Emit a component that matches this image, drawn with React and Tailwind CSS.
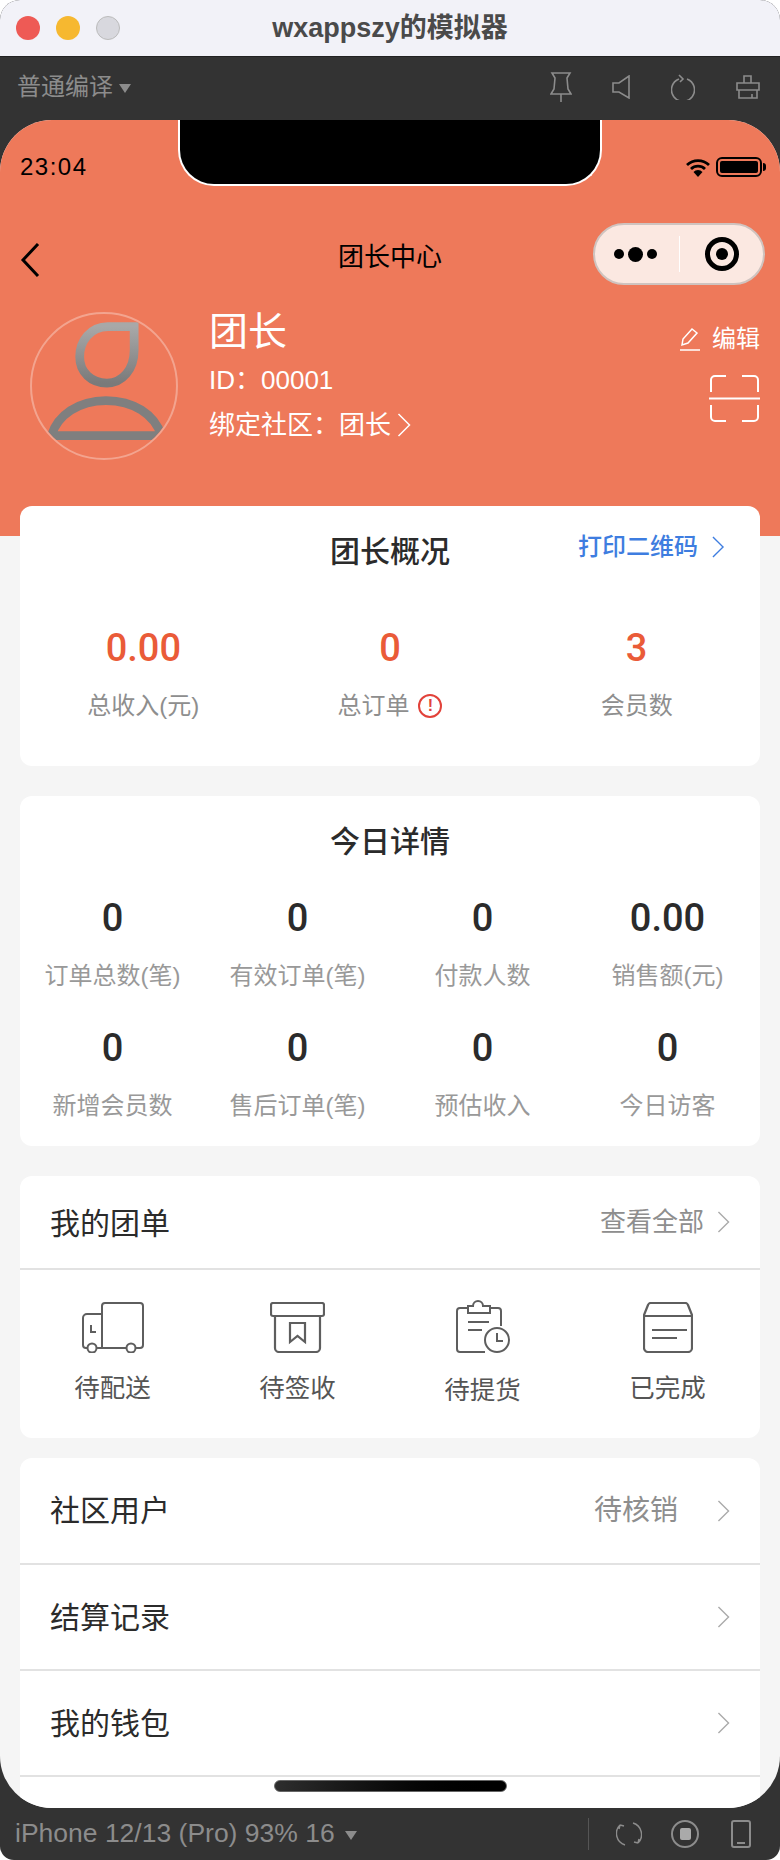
import React from 'react';

const FONT = "font-['Liberation_Sans','Noto_Sans_CJK_SC',sans-serif]";

const Chevron = ({ className }) => (
  <svg viewBox="0 0 14 24" fill="none" stroke="currentColor" strokeWidth="1.5" className={className}>
    <path d="M1.5 1L12.5 12 1.5 23" />
  </svg>
);

const Stat = ({ value, label, extra, color = 'text-[#2b2b2b]', labelColor = 'text-[#8e8e8e]' }) => (
  <div className="flex flex-col items-center">
    <div className={`font-['Roboto',sans-serif] font-medium text-[38px] leading-[42px] ${color}`}>{value}</div>
    <div className={`flex items-center gap-[9px] mt-[21px] text-[24px] leading-[32px] ${labelColor}`}>
      {label}
      {extra}
    </div>
  </div>
);

const Truck = () => (
  <svg viewBox="0 0 62 51" className="w-[62px] h-[51px]" fill="none" stroke="#5e5e5e" strokeWidth="2">
    <path d="M20 12H5a4 4 0 0 0-4 4v27a3 3 0 0 0 3 3h1M20 46V4a3 3 0 0 1 3-3h35a3 3 0 0 1 3 3v39a3 3 0 0 1-3 3h-4M15 46h29" />
    <circle cx="10" cy="46" r="4.5" />
    <circle cx="49" cy="46" r="4.5" />
    <path d="M9 23v7h5" />
  </svg>
);

const Box = () => (
  <svg viewBox="0 0 55 51" className="w-[55px] h-[51px]" fill="none" stroke="#5e5e5e" strokeWidth="2.2">
    <rect x="1" y="1" width="53" height="13" rx="2" />
    <path d="M5 14v32a4 4 0 0 0 4 4h37a4 4 0 0 0 4-4V14" />
    <path d="M20 21h15v19l-7.5-6-7.5 6z" />
  </svg>
);

const Clipboard = () => (
  <svg viewBox="0 0 54 53" className="w-[54px] h-[53px]" fill="none" stroke="#5e5e5e" strokeWidth="2">
    <path d="M12 8H4a3 3 0 0 0-3 3v38a3 3 0 0 0 3 3h25M34 8h8a3 3 0 0 1 3 3v15" />
    <path d="M12 13V6h5a5 5 0 0 1 10 0h7v7z" />
    <path d="M12 22h21M12 30h14" />
    <circle cx="41" cy="40" r="12" />
    <path d="M41 33v8h6" />
  </svg>
);

const Carton = () => (
  <svg viewBox="0 0 50 51" className="w-[50px] h-[51px]" fill="none" stroke="#5e5e5e" strokeWidth="2.2">
    <path d="M1 13L5 3a3 3 0 0 1 3-2h34a3 3 0 0 1 3 2l4 10v33a4 4 0 0 1-4 4H5a4 4 0 0 1-4-4zM1 14h48" />
    <path d="M9 28h35M9 36h25" />
  </svg>
);

const orderTypes = [
  { icon: Truck, label: '待配送', labelClass: 'mt-[18px]' },
  { icon: Box, label: '待签收', labelClass: 'mt-[18px]' },
  { icon: Clipboard, label: '待提货', labelClass: 'mt-[20px]' },
  { icon: Carton, label: '已完成', labelClass: 'mt-[18px]' },
];

const today = [
  ['0', '订单总数(笔)'],
  ['0', '有效订单(笔)'],
  ['0', '付款人数'],
  ['0.00', '销售额(元)'],
  ['0', '新增会员数'],
  ['0', '售后订单(笔)'],
  ['0', '预估收入'],
  ['0', '今日访客'],
];

const rows = [
  { label: '社区用户', right: '待核销', height: 'h-[107px]' },
  { label: '结算记录', height: 'h-[106px]' },
  { label: '我的钱包', height: 'h-[106px]' },
];

export default function App() {
  return (
    <div className={`${FONT} w-[780px] h-[1860px] bg-white overflow-hidden`}>
      <div className="w-full h-full bg-[#333333] rounded-t-[20px] rounded-b-[14px] overflow-hidden flex flex-col">
        {/* title bar */}
        <div className="relative h-[57px] shrink-0 bg-[#f2f2f8] flex items-center justify-center border-b border-[#222]">
          <div className="absolute left-[16px] top-[16px] flex gap-[16px]">
            <span className="w-[24px] h-[24px] rounded-full bg-[#ee5a55]" />
            <span className="w-[24px] h-[24px] rounded-full bg-[#f6b830]" />
            <span className="w-[24px] h-[24px] rounded-full bg-[#d8d8de] border border-[#bbb]" />
          </div>
          <span className="font-bold text-[27px] text-[#4a4a4a]">wxappszy的模拟器</span>
        </div>

        {/* toolbar */}
        <div className="h-[63px] shrink-0 flex items-center justify-between pl-[17px] pr-[20px] pb-[3px] text-[#8c8c8c]">
          <div className="flex items-center gap-[6px] text-[24px]">
            普通编译
            <span className="w-0 h-0 mt-[3px] border-x-[6px] border-x-transparent border-t-[9px] border-t-[#8c8c8c]" />
          </div>
          <div className="flex items-center gap-[41px]">
            <svg viewBox="0 0 22 30" className="w-[22px] h-[30px] -mr-[1px]" fill="none" stroke="currentColor" strokeWidth="1.6">
              <path d="M2 1h18l-3 5 1 11 3 5H1l3-5 1-11zM11 22v8" />
            </svg>
            <svg viewBox="0 0 18 24" className="w-[18px] h-[24px]" fill="none" stroke="currentColor" strokeWidth="1.6">
              <path d="M17 1v22L7 17H1V8h6z" />
            </svg>
            <svg viewBox="0 0 24 26" className="w-[24px] h-[26px]" fill="none" stroke="currentColor" strokeWidth="1.6">
              <path d="M8 5a11.5 11.5 0 1 0 8 0M8 1l4 4-3 3" />
            </svg>
            <svg viewBox="0 0 24 24" className="w-[24px] h-[24px]" fill="none" stroke="currentColor" strokeWidth="1.6">
              <path d="M8 8V1h7v7M1 8h22v7H1zM3 15v8h18v-8M16 23v-4" />
            </svg>
          </div>
        </div>

        {/* phone screen */}
        <div className="relative h-[1688px] shrink-0 bg-[#f5f5f5] rounded-[52px] overflow-hidden">
          <div className="absolute left-[178px] top-0 w-[424px] h-[66px] bg-black border-x-2 border-b-2 border-white rounded-b-[36px]" />

          {/* orange header */}
          <div className="h-[416px] bg-[#ee795a] text-white">
            <div className="h-[94px] flex items-center justify-between pl-[20px] pr-[14px] text-black">
              <span className="text-[24px] tracking-[1.5px] leading-[30px]">23:04</span>
              <div className="flex items-center">
                <svg viewBox="0 0 24 19" className="w-[24px] h-[19px] mr-[6px]" fill="none" stroke="black" strokeWidth="2.8">
                  <path d="M1 7a16 16 0 0 1 22 0M5 11a10 10 0 0 1 14 0" />
                  <path d="M7.5 14a6 6 0 0 1 9 0L12 19z" fill="black" stroke="none" />
                </svg>
                <div className="w-[46px] h-[20px] rounded-[6px] border-2 border-black p-[2px]">
                  <div className="w-full h-full bg-black rounded-[2px]" />
                </div>
                <div className="w-[3px] h-[8px] ml-[1px] bg-black rounded-r-full" />
              </div>
            </div>

            <div className="relative h-[62px] mt-[9px] flex items-center justify-center text-black text-[26px]">
              <svg viewBox="0 0 20 34" className="absolute left-[20px] top-[20px] w-[20px] h-[34px]" fill="none" stroke="black" strokeWidth="3">
                <path d="M18 1L3 17l15 16" />
              </svg>
              <span className="mt-[6px]">团长中心</span>
              <div className="absolute right-[15px] top-0 w-[172px] h-[62px] rounded-full bg-[#fbe8e1] border-2 border-[#cfc3bf] flex items-center">
                <div className="w-[84px] flex items-center justify-center gap-[4px] pr-[4px]">
                  <span className="w-[10px] h-[10px] rounded-full bg-black" />
                  <span className="w-[15px] h-[15px] rounded-full bg-black" />
                  <span className="w-[10px] h-[10px] rounded-full bg-black" />
                </div>
                <div className="w-px h-[36px] bg-white" />
                <div className="flex-1 flex items-center justify-center">
                  <div className="w-[34px] h-[34px] rounded-full border-[5px] border-black flex items-center justify-center">
                    <span className="w-[12px] h-[12px] rounded-full bg-black" />
                  </div>
                </div>
              </div>
            </div>

            <div className="flex mt-[27px] pl-[30px] pr-[20px]">
              <div className="w-[148px] h-[148px] rounded-full border-2 border-[#f3a48f] overflow-hidden shrink-0">
                <svg viewBox="0 0 148 148" className="w-full h-full -m-[2px] min-w-[148px]" fill="none" strokeWidth="9">
                  <defs>
                    <linearGradient id="avatarFade" x1="0" y1="0" x2="0" y2="1">
                      <stop offset="0" stopColor="#a8a8a8" />
                      <stop offset="1" stopColor="#7a7a7a" />
                    </linearGradient>
                  </defs>
                  <path stroke="url(#avatarFade)" d="M105 15H78C60 15 49 30 49 46c0 16 12 27 28 27s28-14 28-34z" />
                  <path stroke="#7f7f7f" d="M20 127C26 106 48 91 76 91s50 14 57 36z" />
                </svg>
              </div>
              <div className="ml-[31px] -mt-[2px]">
                <div className="text-[39px] leading-[44px]">团长</div>
                <div className="text-[26px] leading-[32px] mt-[10px]">ID：00001</div>
                <div className="flex items-center text-[26px] leading-[32px] mt-[13px]">
                  绑定社区：团长
                  <Chevron className="w-[14px] h-[24px] ml-[6px]" />
                </div>
              </div>
              <div className="ml-auto flex flex-col items-end pt-[12px]">
                <div className="flex items-center gap-[12px] text-[24px] leading-[30px]">
                  <svg viewBox="0 0 20 24" className="w-[20px] h-[24px]" fill="none" stroke="white" strokeWidth="1.5">
                    <path d="M2 18l1-6L12 2l5 4-9 10zM0 23h20" />
                  </svg>
                  编辑
                </div>
                <svg viewBox="0 0 51 49" className="w-[51px] h-[49px] mt-[20px]" fill="none" stroke="white" strokeWidth="2">
                  <path d="M0 24.5h51M2 18V6a4 4 0 0 1 4-4h11M33 2h12a4 4 0 0 1 4 4v12M2 31v12a4 4 0 0 0 4 4h11M33 47h12a4 4 0 0 0 4-4V31" />
                </svg>
              </div>
            </div>
          </div>

          {/* cards */}
          <div className="relative -mt-[30px] px-[20px] flex flex-col">
            <div className="relative h-[260px] bg-white rounded-[12px] pt-[26px]">
              <div className="text-center font-medium text-[30px] leading-[40px] text-[#2b2b2b]">团长概况</div>
              <div className="absolute right-[35px] top-[25px] flex items-center gap-[13px] text-[#3e7de0] text-[24px] font-medium leading-[32px]">
                打印二维码
                <Chevron className="w-[14px] h-[22px]" />
              </div>
              <div className="grid grid-cols-3 mt-[55px]">
                <Stat value="0.00" label="总收入(元)" color="text-[#ea5b38]" />
                <Stat
                  value="0"
                  label="总订单"
                  color="text-[#ea5b38]"
                  extra={
                    <span className="w-[24px] h-[24px] rounded-full border-2 border-[#e2423a] text-[#e2423a] text-[16px] leading-[20px] text-center font-bold">!</span>
                  }
                />
                <Stat value="3" label="会员数" color="text-[#ea5b38]" />
              </div>
            </div>

            <div className="h-[350px] mt-[30px] bg-white rounded-[12px] pt-[26px]">
              <div className="text-center font-medium text-[30px] leading-[40px] text-[#2b2b2b]">今日详情</div>
              <div className="grid grid-cols-4 gap-y-[35px] mt-[35px]">
                {today.map(([value, label]) => (
                  <Stat key={label} value={value} label={label} labelColor="text-[#999999]" />
                ))}
              </div>
            </div>

            <div className="h-[262px] mt-[30px] bg-white rounded-[12px]">
              <div className="h-[94px] flex items-center justify-between pl-[30px] pr-[30px] border-b-2 border-[#e2e2e2] text-[30px] text-[#2b2b2b]">
                <span className="mt-[3px]">我的团单</span>
                <div className="flex items-center gap-[13px] text-[26px] text-[#8e8e8e]">
                  查看全部
                  <Chevron className="w-[13px] h-[22px] text-[#aaaaaa]" />
                </div>
              </div>
              <div className="grid grid-cols-4 pt-[30px]">
                {orderTypes.map(({ icon: Icon, label, labelClass }) => (
                  <div key={label} className="flex flex-col items-center">
                    <div className="h-[53px] flex items-end"><Icon /></div>
                    <div className={`${labelClass} text-[25.5px] leading-[34px] text-[#555555]`}>{label}</div>
                  </div>
                ))}
              </div>
            </div>

            <div className="mt-[20px] bg-white rounded-t-[12px]">
              {rows.map((row) => (
                <div key={row.label} className={`${row.height} flex items-center justify-between pl-[30px] pr-[30px] border-b-2 border-[#e2e2e2] text-[30px] text-[#2b2b2b]`}>
                  {row.label}
                  <div className="flex items-center gap-[39px] text-[28px] text-[#8e8e8e]">
                    {row.right}
                    <Chevron className="w-[13px] h-[22px] text-[#aaaaaa]" />
                  </div>
                </div>
              ))}
            </div>
            <div className="h-[40px] bg-white" />
          </div>

          <div className="absolute left-[274px] top-[1660px] w-[233px] h-[12px] rounded-full bg-gradient-to-r from-[#2e2e2e] to-black border border-[#666]" />
        </div>

        {/* bottom bar */}
        <div className="flex-1 flex items-center justify-between pl-[15px] pr-[29px] text-[#8c8c8c]">
          <div className="flex items-center gap-[10px] text-[26.5px]">
            iPhone 12/13 (Pro) 93% 16
            <span className="w-0 h-0 mt-[3px] border-x-[6px] border-x-transparent border-t-[9px] border-t-[#8c8c8c]" />
          </div>
          <div className="flex items-center">
            <div className="w-px h-[32px] bg-[#555] mr-[27px]" />
            <svg viewBox="0 0 26 26" className="w-[26px] h-[26px] mr-[29px]" fill="none" stroke="currentColor" strokeWidth="1.5">
              <path d="M17 2a12 12 0 0 1 5 20M9 24A12 12 0 0 1 4 4M22 22l-4-1M22 22l1-4M4 4l4 1M4 4l-1 4" />
            </svg>
            <div className="w-[28px] h-[28px] rounded-full border-2 border-current flex items-center justify-center mr-[32px]">
              <span className="w-[11px] h-[12px] rounded-[2px] bg-[#aaaaaa]" />
            </div>
            <div className="w-[20px] h-[28px] rounded-[3px] border-2 border-current flex items-end justify-center pb-[2px]">
              <span className="w-[8px] h-[2px] bg-current" />
            </div>
          </div>
        </div>
      </div>
    </div>
  );
}
